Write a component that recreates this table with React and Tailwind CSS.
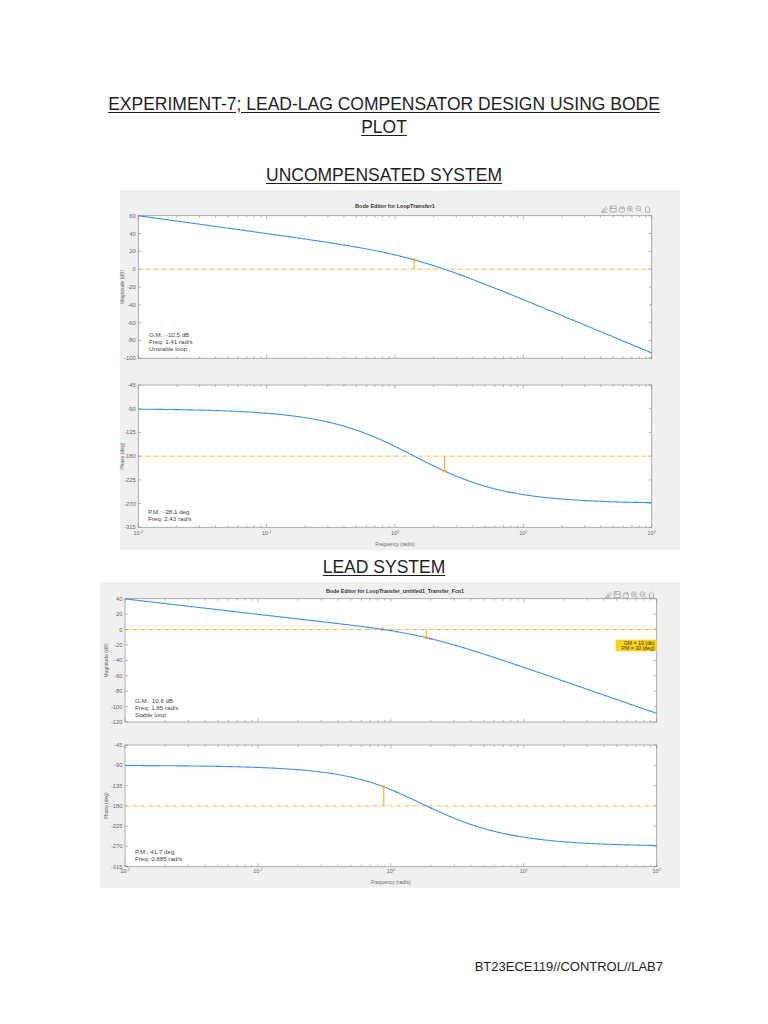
const FONT = "'Liberation Sans', Arial, sans-serif";
const BLUE = "#3f93dc";
const ORANGE = "#f2ac1c";
const RED = "#e0504a";

const deg = (r) => (r * 180) / Math.PI;

// G(s) = 20 / (s(s+1)(s+2))
const uncMag = (w) => 20 * Math.log10(20 / (w * Math.sqrt(w * w + 1) * Math.sqrt(w * w + 4)));
const uncPhase = (w) => -90 - deg(Math.atan(w)) - deg(Math.atan(w / 2));

// lead: K (1 + s/z) / (s(s+1)(s+2)(1 + s/p))
const K = 1.94;
const Z = 0.7;
const P = 1.3;
const leadMag = (w) =>
  20 *
  Math.log10(
    (K * Math.sqrt(1 + (w / Z) ** 2)) /
      (w * Math.sqrt(w * w + 1) * Math.sqrt(w * w + 4) * Math.sqrt(1 + (w / P) ** 2))
  );
const leadPhase = (w) =>
  -90 - deg(Math.atan(w)) - deg(Math.atan(w / 2)) + deg(Math.atan(w / Z)) - deg(Math.atan(w / P));

const range = (a, b, s) => {
  const out = [];
  for (let v = a; s > 0 ? v <= b : v >= b; v += s) out.push(v);
  return out;
};

function Toolbar({ x, y }) {
  const s = { fill: "none", stroke: "#8c8c8c", strokeWidth: 0.6 };
  return (
    <g transform={`translate(${x} ${y - 3.5})`}>
      <g {...s}>
        <path d="M0.5 6.3 L2.8 3.6 L4.3 5.1 Z M2.8 3.6 L5.8 0.8 M4.3 5.1 L6.8 2.2 M0.4 6.8 H6.6" />
      </g>
      <g transform="translate(8.6 0)" {...s}>
        <rect x="0.5" y="0.5" width="6" height="6" />
        <path d="M0.5 3 H6.5 M2.2 0.5 V3" />
      </g>
      <g transform="translate(17.2 0)" {...s}>
        <path d="M1.6 6.6 C0.9 5.4 0.8 4.4 1.2 3.4 L1.6 2.6 V1.6 M2.8 3.6 V0.8 M4 3.6 V0.6 M5.2 3.6 V1 M6.3 4.2 V2.2 M1.6 6.6 H5.4 C6.1 5.6 6.4 4.9 6.3 4.2" />
      </g>
      <g transform="translate(25.8 0)" {...s}>
        <circle cx="3" cy="3" r="2.4" />
        <path d="M4.8 4.8 L6.8 6.8 M1.8 3 H4.2 M3 1.8 V4.2" />
      </g>
      <g transform="translate(34.4 0)" {...s}>
        <circle cx="3" cy="3" r="2.4" />
        <path d="M4.8 4.8 L6.8 6.8 M1.8 3 H4.2" />
      </g>
      <g transform="translate(43 0)" {...s}>
        <path d="M0.6 3.6 L3.5 0.8 L6.4 3.6 M1.5 2.8 V6.6 H5.5 V2.8" />
      </g>
    </g>
  );
}

function Plot({ ax, d0, d1, fn, ticks, hline, marker, reds, notes, ylabel, ylabelX }) {
  const X = (w) => ax.x0 + ((Math.log10(w) - d0) / (d1 - d0)) * (ax.x1 - ax.x0);
  const Y = (v) => ax.y0 + ((ax.top - v) / (ax.top - ax.bot)) * (ax.y1 - ax.y0);

  const pts = [];
  for (let i = 0; i <= 400; i++) {
    const w = 10 ** (d0 + ((d1 - d0) * i) / 400);
    pts.push(`${X(w).toFixed(2)},${Y(fn(w)).toFixed(2)}`);
  }

  const xt = [];
  for (let d = d0; d < d1; d++) {
    for (let k = 1; k <= 9; k++) xt.push({ x: X(k * 10 ** d), major: k === 1 });
  }
  xt.push({ x: X(10 ** d1), major: true });

  const midY = (ax.y0 + ax.y1) / 2;
  const my = marker && fn(marker);

  return (
    <g>
      <rect
        x={ax.x0}
        y={ax.y0}
        width={ax.x1 - ax.x0}
        height={ax.y1 - ax.y0}
        fill="#fff"
        stroke="#9a9a9a"
        strokeWidth="0.8"
      />
      {xt.map((t, i) => (
        <g key={i} stroke="#8a8a8a" strokeWidth="0.6">
          <line x1={t.x} x2={t.x} y1={ax.y0} y2={ax.y0 + (t.major ? 3.5 : 2)} />
          <line x1={t.x} x2={t.x} y1={ax.y1} y2={ax.y1 - (t.major ? 3.5 : 2)} />
        </g>
      ))}
      {ticks.map((v) => (
        <g key={v}>
          <line x1={ax.x0} x2={ax.x0 + 3} y1={Y(v)} y2={Y(v)} stroke="#8a8a8a" strokeWidth="0.6" />
          <line x1={ax.x1} x2={ax.x1 - 3} y1={Y(v)} y2={Y(v)} stroke="#8a8a8a" strokeWidth="0.6" />
          <text x={ax.x0 - 2.5} y={Y(v) + 2} fontSize="5.8" fill="#666" textAnchor="end">
            {v}
          </text>
        </g>
      ))}
      <text
        x={ylabelX}
        y={midY}
        fontSize="5"
        fill="#666"
        textAnchor="middle"
        transform={`rotate(-90 ${ylabelX} ${midY})`}
      >
        {ylabel}
      </text>
      <line
        x1={ax.x0}
        x2={ax.x1}
        y1={Y(hline)}
        y2={Y(hline)}
        stroke={ORANGE}
        strokeWidth="0.8"
        strokeDasharray="4 1.5 1 1.5"
      />
      <polyline points={pts.join(" ")} fill="none" stroke={BLUE} strokeWidth="1.1" />
      {reds &&
        reds.map((r, i) =>
          r.o ? (
            <circle key={i} cx={X(r.w)} cy={Y(fn(r.w))} r="1.4" fill="none" stroke={RED} strokeWidth="0.6" />
          ) : (
            <path
              key={i}
              d={`M${X(r.w) - 1.2} ${Y(fn(r.w)) - 1.2} l2.4 2.4 M${X(r.w) + 1.2} ${Y(fn(r.w)) - 1.2} l-2.4 2.4`}
              stroke={RED}
              strokeWidth="0.6"
            />
          )
        )}
      {marker && (
        <g>
          <line x1={X(marker)} x2={X(marker)} y1={Y(hline)} y2={Y(my)} stroke={ORANGE} strokeWidth="1" />
          <circle cx={X(marker)} cy={Y(my)} r="1.6" fill={ORANGE} />
        </g>
      )}
      {notes.lines.map((t, i) => (
        <text key={i} x={notes.x} y={notes.y + i * 7} fontSize="6.2" fill="#444">
          {t}
        </text>
      ))}
    </g>
  );
}

function XLabels({ d0, d1, x0, x1, y, freqY }) {
  const out = [];
  for (let d = d0; d <= d1; d++) {
    const x = x0 + ((d - d0) / (d1 - d0)) * (x1 - x0);
    out.push(
      <text key={d} x={x} y={y} fontSize="5.5" fill="#666" textAnchor="middle">
        10
        <tspan dy="-2.2" fontSize="3.8">
          {d}
        </tspan>
      </text>
    );
  }
  return (
    <g>
      {out}
      <text x={(x0 + x1) / 2} y={freqY} fontSize="5" fill="#666" textAnchor="middle">
        Frequency (rad/s)
      </text>
    </g>
  );
}

function UncompensatedPanel() {
  const mag = { x0: 18.3, x1: 531.7, y0: 25.7, y1: 168.3, top: 60, bot: -100 };
  const ph = { x0: 18.3, x1: 531.7, y0: 195, y1: 337.3, top: -45, bot: -315 };
  return (
    <div className="ml-[120px] mt-[3.5px] h-[360px] w-[560px] bg-[#f0f0f0]">
      <svg width="560" height="360" viewBox="0 0 560 360" className="block overflow-visible" fontFamily={FONT}>
        <text x="275" y="18" fontSize="5.5" fontWeight="bold" fill="#333" textAnchor="middle">
          Bode Editor for LoopTransfer1
        </text>
        <Toolbar x={481} y={19} />
        <Plot
          ax={mag}
          d0={-2}
          d1={2}
          fn={uncMag}
          ticks={range(60, -100, -20)}
          hline={0}
          marker={1.41}
          ylabel="Magnitude (dB)"
          ylabelX={4}
          notes={{ x: 29, y: 147, lines: ["G.M.: -10.5 dB", "Freq: 1.41 rad/s", "Unstable loop"] }}
        />
        <Plot
          ax={ph}
          d0={-2}
          d1={2}
          fn={uncPhase}
          ticks={range(-45, -315, -45)}
          hline={-180}
          marker={2.43}
          ylabel="Phase (deg)"
          ylabelX={4}
          notes={{ x: 28, y: 323.5, lines: ["P.M.: -28.1 deg", "Freq: 2.43 rad/s"] }}
        />
        <XLabels d0={-2} d1={2} x0={18.3} x1={531.7} y={345} freqY={356} />
      </svg>
    </div>
  );
}

function LeadPanel() {
  const mag = { x0: 25, x1: 556.7, y0: 16.7, y1: 140, top: 40, bot: -120 };
  const ph = { x0: 25, x1: 556.7, y0: 163, y1: 284.7, top: -45, bot: -315 };
  const reds = [{ w: 0.86, o: true }, { w: 1.1 }, { w: 2.0 }];
  return (
    <div className="ml-[100px] mt-[3.5px] h-[306px] w-[580px] bg-[#f0f0f0]">
      <svg width="580" height="306" viewBox="0 0 580 306" className="block overflow-visible" fontFamily={FONT}>
        <text x="295" y="11" fontSize="5.3" fontWeight="bold" fill="#333" textAnchor="middle">
          Bode Editor for LoopTransfer_untitled1_Transfer_Fcn1
        </text>
        <Toolbar x={505} y={12.7} />
        <Plot
          ax={mag}
          d0={-2}
          d1={2}
          fn={leadMag}
          ticks={range(40, -120, -20)}
          hline={0}
          marker={1.85}
          reds={reds}
          ylabel="Magnitude (dB)"
          ylabelX={8}
          notes={{ x: 35, y: 121, lines: ["G.M.: 10.6 dB", "Freq: 1.85 rad/s", "Stable loop"] }}
        />
        <rect x="515.7" y="57.7" width="41" height="11.6" fill="#ffd21a" />
        <text x="554.5" y="62.6" fontSize="5.2" fill="#333" textAnchor="end">
          GM = 10 (db)
        </text>
        <text x="554.5" y="68.2" fontSize="5.2" fill="#333" textAnchor="end">
          PM = 30 (deg)
        </text>
        <Plot
          ax={ph}
          d0={-2}
          d1={2}
          fn={leadPhase}
          ticks={range(-45, -315, -45)}
          hline={-180}
          marker={0.885}
          reds={reds.slice(1)}
          ylabel="Phase (deg)"
          ylabelX={8}
          notes={{ x: 35, y: 272, lines: ["P.M.: 41.7 deg", "Freq: 0.885 rad/s"] }}
        />
        <XLabels d0={-2} d1={2} x0={25} x1={556.7} y={291} freqY={301.7} />
      </svg>
    </div>
  );
}

export default function App() {
  return (
    <div className="min-h-[1024px] w-[768px] bg-white font-['Liberation_Sans',Arial,sans-serif] text-[#1e1e1e]">
      <h1 className="pt-[92.5px] text-center text-[17.5px] leading-[23px] underline underline-offset-2">
        EXPERIMENT-7; LEAD-LAG COMPENSATOR DESIGN USING BODE
        <br />
        PLOT
      </h1>
      <h2 className="mt-[25px] text-center text-[17.5px] leading-[23px] underline underline-offset-2">
        UNCOMPENSATED SYSTEM
      </h2>
      <UncompensatedPanel />
      <h2 className="mt-[5.5px] text-center text-[17.5px] leading-[23px] underline underline-offset-2">
        LEAD SYSTEM
      </h2>
      <LeadPanel />
      <p className="mt-[71px] pr-[105px] text-right text-[13px] leading-[16px]">BT23ECE119//CONTROL//LAB7</p>
    </div>
  );
}
